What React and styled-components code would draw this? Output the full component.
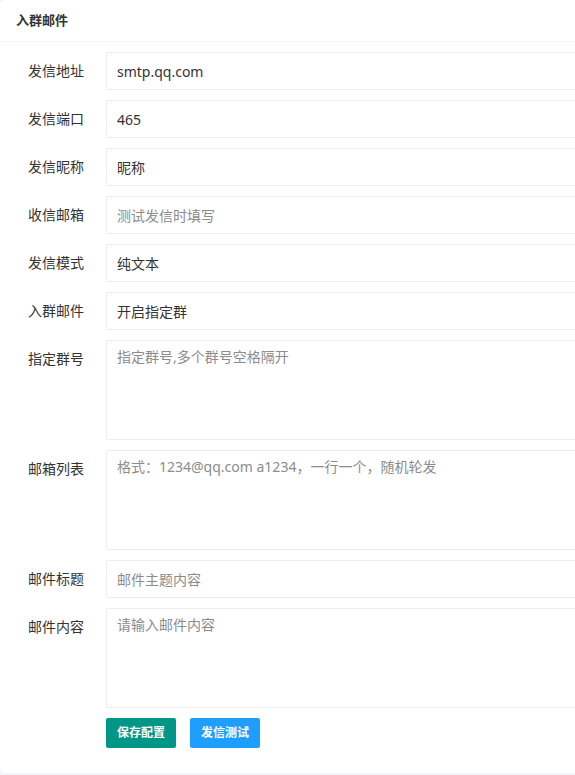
import React from 'react'
import styled, { createGlobalStyle } from 'styled-components'

const GlobalStyle = createGlobalStyle`
    html, body {
        margin: 0;
        padding: 0;
        background: #f4f5f7;
        overflow: hidden;
    }
    body {
        font-family: "Noto Sans", "Noto Sans CJK SC", sans-serif;
        font-size: 14px;
        color: #333;
    }
`

const Viewport = styled.div`
    width: 575px;
    height: 775px;
    overflow: hidden;
`

const Card = styled.div`
    width: 640px;
    height: 773px;
    background: #fff;
    border-radius: 6px;
    box-sizing: border-box;
`

const CardHeader = styled.div`
    height: 41px;
    line-height: 41px;
    padding: 0 16px;
    border-bottom: 1px solid #f6f6f6;
    font-size: 13px;
    font-weight: 700;
    color: #333;
`

const CardBody = styled.form`
    padding: 10px 0 0 0;
    display: flex;
    flex-direction: column;
    gap: 10px;
`

const Row = styled.div`
    display: flex;
    flex-direction: row;
    align-items: flex-start;
`

const Label = styled.label`
    width: 84px;
    flex-shrink: 0;
    text-align: right;
    padding: 9px 0;
    line-height: 20px;
    font-size: 14px;
    color: #333;
`

const FieldBox = styled.div`
    margin-left: 22px;
    flex-grow: 1;
`

const Input = styled.input`
    display: block;
    width: 100%;
    height: 38px;
    box-sizing: border-box;
    padding: 0 10px;
    border: 1px solid #eee;
    border-radius: 2px;
    background: #fff;
    font-family: inherit;
    font-size: 14px;
    color: #333;
    outline: none;
    &::placeholder {
        color: #8c8c8c;
    }
`

const TextArea = styled.textarea`
    display: block;
    width: 100%;
    height: 100px;
    box-sizing: border-box;
    padding: 6px 10px;
    line-height: 20px;
    border: 1px solid #eee;
    border-radius: 2px;
    resize: none;
    font-family: inherit;
    font-size: 14px;
    color: #333;
    outline: none;
    &::placeholder {
        color: #8c8c8c;
    }
`

const Actions = styled.div`
    display: flex;
    flex-direction: row;
    gap: 14px;
    margin-left: 106px;
`

const Button = styled.button`
    height: 30px;
    padding: 0 11px;
    border: none;
    border-radius: 2px;
    background: ${props => props.color};
    color: #fff;
    font-family: inherit;
    font-size: 12px;
    font-weight: 700;
    line-height: 30px;
    cursor: pointer;
`

const fields = [
    { label: '发信地址', value: 'smtp.qq.com' },
    { label: '发信端口', value: '465' },
    { label: '发信昵称', value: '昵称' },
    { label: '收信邮箱', placeholder: '测试发信时填写' },
    { label: '发信模式', value: '纯文本' },
    { label: '入群邮件', value: '开启指定群' },
    { label: '指定群号', placeholder: '指定群号,多个群号空格隔开', area: true },
    { label: '邮箱列表', placeholder: '格式：1234@qq.com a1234，一行一个，随机轮发', area: true },
    { label: '邮件标题', placeholder: '邮件主题内容' },
    { label: '邮件内容', placeholder: '请输入邮件内容', area: true },
]

const App = () => {
    return (
        <Viewport>
            <GlobalStyle />
            <Card>
                <CardHeader>入群邮件</CardHeader>
                <CardBody onSubmit={e => e.preventDefault()}>
                    {fields.map(f => (
                        <Row key={f.label}>
                            <Label>{f.label}</Label>
                            <FieldBox>
                                {f.area
                                    ? <TextArea placeholder={f.placeholder} />
                                    : <Input defaultValue={f.value} placeholder={f.placeholder} />}
                            </FieldBox>
                        </Row>
                    ))}
                    <Actions>
                        <Button type="button" color="#009688">保存配置</Button>
                        <Button type="button" color="#1e9fff">发信测试</Button>
                    </Actions>
                </CardBody>
            </Card>
        </Viewport>
    )
}

export default App
